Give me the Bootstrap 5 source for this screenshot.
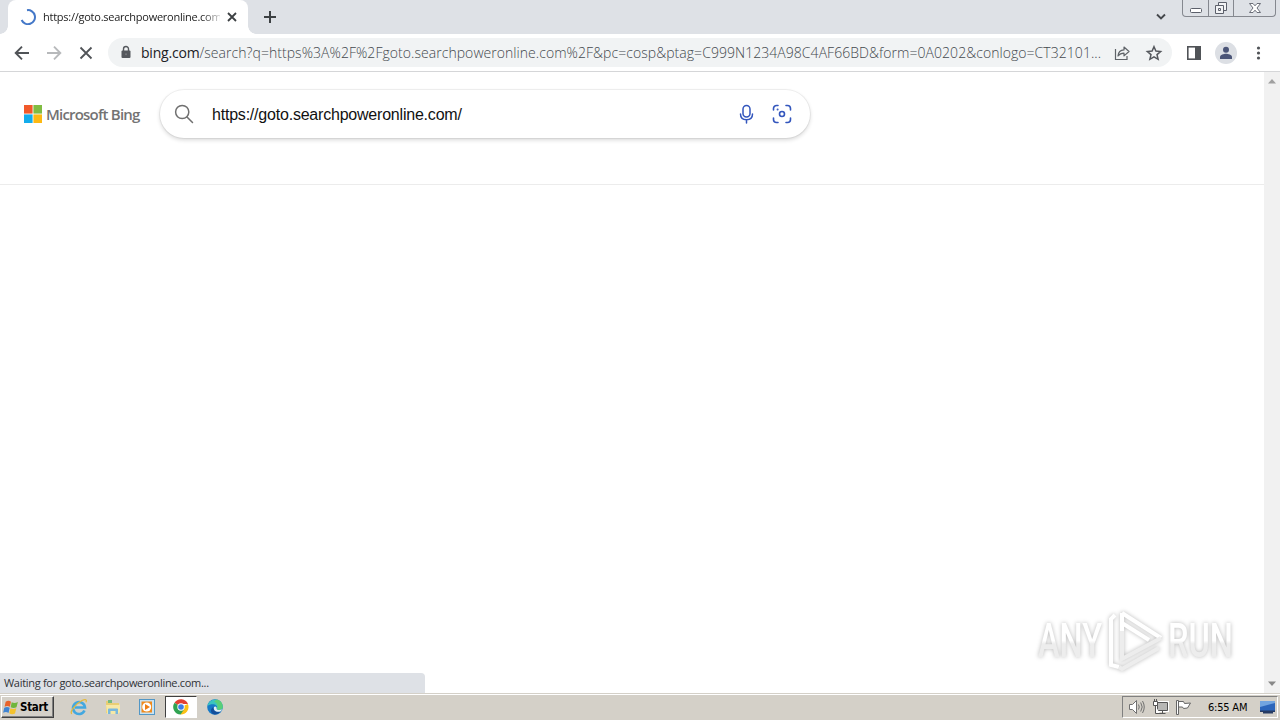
<!DOCTYPE html>
<html lang="en">

<head>
  <meta charset="UTF-8" />
  <title>https://goto.searchpoweronline.com/</title>
  <meta name="viewport" content="width=device-width, initial-scale=1" />
  <link rel="stylesheet" href="https://cdn.jsdelivr.net/npm/bootstrap@5.3.2/dist/css/bootstrap.min.css" />
  <style>
    body {
      width: 1280px;
      height: 720px;
      overflow: hidden;
      font-family: "Open Sans", "Noto Sans", sans-serif;
      background: #fff;
    }

    svg {
      display: block;
      flex-shrink: 0;
    }

    /* tab strip */
    .tab-strip {
      height: 34px;
      background: #dee1e6;
      padding-left: 8px;
    }

    .browser-tab {
      position: relative;
      width: 240px;
      height: 34px;
      padding: 0 9px 0 12px;
      background: #fff;
      border-radius: 8px 8px 0 0;
    }

    .browser-tab::before,
    .browser-tab::after {
      content: "";
      position: absolute;
      bottom: 0;
      width: 8px;
      height: 8px;
    }

    .browser-tab::before {
      left: -8px;
      background: radial-gradient(circle at 0 0, transparent 7.5px, #fff 8px);
    }

    .browser-tab::after {
      right: -8px;
      background: radial-gradient(circle at 100% 0, transparent 7.5px, #fff 8px);
    }

    .tab-title {
      width: 177px;
      margin-left: 7px;
      font-size: 11px;
      letter-spacing: -0.25px;
      color: #222;
      -webkit-mask-image: linear-gradient(90deg, #000 90%, transparent 102%);
    }

    .win-buttons {
      width: 94px;
      height: 17px;
      margin: 0 4px 0 14px;
      border: 1px solid #85888f;
      border-top: 0;
      border-radius: 0 0 4px 4px;
    }

    .win-buttons span+span {
      border-left: 1px solid #85888f;
    }

    /* toolbar */
    .toolbar {
      height: 38px;
      padding: 0 13px;
      border-bottom: 1px solid #d5d6d8;
    }

    .omnibox {
      width: 1064px;
      height: 29px;
      margin-left: 13px;
      padding: 0 9px 0 10px;
      border-radius: 15px;
      background: #f1f3f4;
    }

    .url-text {
      width: 965px;
      margin-left: 7px;
      font-size: 14px;
      font-weight: 300;
      letter-spacing: 0.05px;
      color: #44494e;
    }

    .url-text b {
      font-weight: 400;
      letter-spacing: -0.2px;
      color: #202124;
    }

    .avatar {
      width: 22px;
      height: 22px;
      background: #dcdfe4;
    }

    /* page */
    .viewport {
      height: 621px;
    }

    .bing-header {
      height: 113px;
      padding: 17px 0 0 24px;
      border-bottom: 1px solid #ececec;
    }

    .bing-name {
      width: 95px;
      margin-left: 4px;
      font-size: 15px;
      font-weight: 600;
      letter-spacing: -0.8px;
      color: #737373;
    }

    .search-box {
      width: 650px;
      height: 48px;
      margin-left: 19px;
      padding: 0 18px 0 14px;
      border-radius: 24px;
      background: #fff;
      box-shadow: 0 0 0 1px rgba(0, 0, 0, .05), 0 2px 4px rgba(0, 0, 0, .16);
    }

    .query {
      margin: 2px 0 0 18px;
      font-family: "Liberation Sans", Arial, sans-serif;
      font-size: 16px;
      letter-spacing: -0.21px;
      color: #111;
    }

    .scroll-track {
      width: 16px;
      background: #f1f1f1;
      padding: 7px 0;
    }

    .status-bubble {
      position: absolute;
      left: 0;
      bottom: 0;
      width: 425px;
      height: 20px;
      padding-left: 4px;
      border-radius: 0 4px 0 0;
      background: #dee1e6;
      font-size: 11px;
      letter-spacing: -0.3px;
      color: #303236;
    }

    .watermark {
      position: absolute;
      left: 1034px;
      bottom: 17px;
      filter: drop-shadow(0 0 2px rgba(0, 0, 0, .28));
    }

    /* taskbar */
    .taskbar {
      height: 27px;
      border-top: 1px solid #d4d0c8;
      box-shadow: inset 0 1px #fff;
      background: #d4d0c8;
      padding: 2px 2px 2px 1px;
    }

    .start-btn {
      width: 53px;
      height: 22px;
      padding-left: 1px;
      border: 1px solid;
      border-color: #fff #404040 #404040 #fff;
      box-shadow: inset -1px -1px #808080;
      font: bold 11.500px "DejaVu Sans Condensed", sans-serif;
      letter-spacing: -0.3px;
      color: #000;
    }

    .task-slot {
      width: 34px;
      height: 22px;
    }

    .task-active {
      width: 32px;
      margin: 0 1px;
      background: #fff;
      border: 1px solid;
      border-color: #404040 #fff #fff #404040;
    }

    .tray {
      width: 156px;
      height: 22px;
      padding-left: 5px;
      border: 1px solid;
      border-color: #808080 #fff #fff #808080;
    }

    .clock {
      width: 41px;
      margin-left: 16px;
      font: 11px "DejaVu Sans Condensed", sans-serif;
      letter-spacing: -0.2px;
      color: #000;
    }
  </style>
</head>

<body class="d-flex flex-column">

  <div class="tab-strip d-flex">
    <div class="browser-tab d-flex align-items-center">
      <svg width="16" height="16" viewBox="0 0 16 16" fill="none" stroke="#4478c8" stroke-width="2">
        <path d="M7 1.2A7 7 0 1 1 1.6 11" />
      </svg>
      <div class="tab-title text-nowrap overflow-hidden">https://goto.searchpoweronline.com/</div>
      <svg class="ms-auto" width="14" height="14" viewBox="0 0 14 14" stroke="#3c4043" stroke-width="1.8">
        <path d="M3 3l8 8M11 3l-8 8" />
      </svg>
    </div>
    <svg class="mt-2" style="margin-left: 13px" width="18" height="18" viewBox="0 0 18 18" stroke="#3c4043" stroke-width="2">
      <path d="M9 3v12M3 9h12" />
    </svg>
    <svg class="ms-auto mt-2" width="14" height="18" viewBox="0 0 14 18" fill="none" stroke="#45484c" stroke-width="1.9">
      <path d="M3 6.500l4 4 4-4" />
    </svg>
    <div class="win-buttons d-flex">
      <span class="d-flex justify-content-center" style="width: 25px">
        <svg width="14" height="16" viewBox="0 0 14 16" fill="#fff" stroke="#5c606b"><rect x="1.500" y="8.500" width="11" height="4" rx="1" /></svg>
      </span>
      <span class="d-flex justify-content-center" style="width: 25px">
        <svg width="14" height="16" viewBox="0 0 14 16" fill="#f2f3f5" stroke="#5c606b">
          <path d="M4.500 2.500h8v8h-8z" />
          <path d="M1.500 5.500h8v8h-8z" />
          <path d="M4.500 8.500h2v2h-2z" />
        </svg>
      </span>
      <span class="d-flex justify-content-center flex-grow-1">
        <svg width="14" height="16" viewBox="0 0 14 16" fill="#fff" stroke="#5c606b" stroke-width=".9">
          <path d="M1.500 3.500h3.500l2 2.300 2-2.300h3.500L9 8l3.500 4.500H9l-2-2.300-2 2.300H1.500L5 8z" />
        </svg>
      </span>
    </div>
  </div>

  <div class="toolbar d-flex align-items-center">
    <svg width="18" height="18" viewBox="0 0 18 18" fill="none" stroke="#505357" stroke-width="1.9"><path d="M16 9H3M9 2.700L2.700 9 9 15.300" /></svg>
    <svg style="margin-left: 14px" width="18" height="18" viewBox="0 0 18 18" fill="none" stroke="#b7b9bb" stroke-width="1.9"><path d="M2 9h13M9 2.700L15.300 9 9 15.300" /></svg>
    <svg style="margin-left: 14px" width="18" height="18" viewBox="0 0 18 18" stroke="#505357" stroke-width="1.8"><path d="M3.500 3.500l11 11M14.500 3.500l-11 11" /></svg>
    <div class="omnibox d-flex align-items-center">
      <svg width="16" height="16" viewBox="0 0 16 16">
        <rect x="3.500" y="5.500" width="9" height="7.500" rx="1" fill="#55585d" />
        <path d="M5.500 6V4a2.500 2.500 0 0 1 5 0v2" fill="none" stroke="#55585d" stroke-width="1.400" />
        <circle cx="8" cy="9.300" r="1" fill="#77797c" />
      </svg>
      <div class="url-text text-nowrap"><b>bing.com</b>/search?q=https%3A%2F%2Fgoto.searchpoweronline.com%2F&amp;pc=cosp&amp;ptag=C999N1234A98C4AF66BD&amp;form=0A0202&amp;conlogo=CT32101...</div>
      <svg class="ms-auto" width="18" height="18" viewBox="0 0 18 18" fill="none" stroke="#5f6368" stroke-width="1.200">
        <path d="M2.500 5v10.500h11.500V12" />
        <path d="M5 12c.3-3.700 2.300-6 6-6.100V3l5 4.500-5 4.400V9.200C8.500 9.200 6.500 10 5 12z" stroke-linejoin="round" />
      </svg>
      <svg style="margin-left: 14px" width="18" height="18" viewBox="0 0 18 18" fill="none" stroke="#55585d" stroke-width="1.500">
        <path d="M9 2.700l1.900 4.400 4.700.4-3.600 3.100 1.100 4.700L9 12.800l-4.100 2.500L6 10.600 2.400 7.500l4.700-.4z" />
      </svg>
    </div>
    <svg style="margin-left: 13px" width="18" height="18" viewBox="0 0 18 18">
      <rect x="2.800" y="2.800" width="12.400" height="12.400" fill="#fff" stroke="#505357" stroke-width="1.600" />
      <path d="M10 3h5v12h-5z" fill="#505357" />
    </svg>
    <div class="avatar rounded-circle d-flex justify-content-center align-items-center" style="margin-left: 12px">
      <svg width="14" height="14" viewBox="0 0 14 14" fill="#4b5577"><circle cx="7" cy="3.700" r="3" /><path d="M1 13v-2c0-2.200 4-3.200 6-3.200s6 1 6 3.200v2z" /></svg>
    </div>
    <svg style="margin-left: 12px" width="18" height="18" viewBox="0 0 18 18" fill="#505357"><circle cx="9.500" cy="4" r="1.600" /><circle cx="9.500" cy="9" r="1.600" /><circle cx="9.500" cy="14" r="1.600" /></svg>
  </div>

  <div class="viewport d-flex position-relative">
    <main class="flex-grow-1">
      <header class="bing-header d-flex align-items-start">
        <div class="d-flex align-items-center" style="height: 50px">
          <svg width="18" height="18" viewBox="0 0 18 18">
            <path d="M0 0h8.600v8.600H0z" fill="#f1592a" />
            <path d="M9.400 0H18v8.600H9.400z" fill="#80bc42" />
            <path d="M0 9.400h8.600V18H0z" fill="#13acec" />
            <path d="M9.400 9.400H18V18H9.400z" fill="#fdb913" />
          </svg>
          <div class="bing-name text-nowrap">Microsoft Bing</div>
        </div>
        <div class="search-box d-flex align-items-center" style="margin-top: 1px">
          <svg width="20" height="20" viewBox="0 0 20 20" fill="none" stroke="#707070" stroke-width="1.500" stroke-linecap="round">
            <circle cx="8.200" cy="8" r="6.600" /><path d="M13 13l5.500 5.500" />
          </svg>
          <div class="query text-nowrap">https://goto.searchpoweronline.com/</div>
          <svg class="ms-auto" width="20" height="20" viewBox="0 0 20 20" fill="none" stroke="#3356bd" stroke-width="1.500" stroke-linecap="round">
            <rect x="7" y="1.500" width="7" height="11.500" rx="3.500" /><path d="M4.500 10c0 3.700 2.500 5.700 6 5.700s6-2 6-5.700M10.500 16v3" />
          </svg>
          <svg style="margin-left: 16px" width="20" height="20" viewBox="0 0 20 20" fill="none" stroke="#3356bd" stroke-width="1.600" stroke-linecap="round">
            <path d="M1.500 6V4.500a3 3 0 0 1 3-3H6M14 1.500h1.500a3 3 0 0 1 3 3V6M18.500 14v1.500a3 3 0 0 1-3 3H14M6 18.500H4.500a3 3 0 0 1-3-3V14" />
            <circle cx="10" cy="10" r="2.500" /><circle cx="5.600" cy="5.600" r=".4" stroke-width="1.200" />
          </svg>
        </div>
      </header>
    </main>
    <div class="scroll-track d-flex flex-column justify-content-between align-items-center">
      <svg width="8" height="5" viewBox="0 0 8 5" fill="#a0a0a0"><path d="M4 0l4 4.500H0z" /></svg>
      <svg width="8" height="5" viewBox="0 0 8 5" fill="#888"><path d="M0 .5h8L4 5z" /></svg>
    </div>

    <svg class="watermark" width="208" height="72" viewBox="0 0 208 72">
      <defs>
        <linearGradient id="fade" x1="0" y1="0" x2="0" y2="1">
          <stop offset=".5" stop-color="#fff" />
          <stop offset=".56" stop-color="#ededed" />
        </linearGradient>
      </defs>
      <g fill="url(#fade)" font-family="Roboto, sans-serif" font-size="49" font-weight="500">
        <text x="4" y="53" textLength="64" lengthAdjust="spacingAndGlyphs">ANY</text>
        <text x="134" y="53" textLength="65" lengthAdjust="spacingAndGlyphs">RUN</text>
      </g>
      <g fill="none" stroke="#fff" stroke-width="4">
        <path d="M88 9l39 25M88 9v18M81 11l-4 4v46l8 2" />
        <path d="M88 27v28l39-21M85 63l3 2 37-21" stroke="#ededed" />
        <path d="M88 19l27 17" />
      </g>
    </svg>

    <div class="status-bubble d-flex align-items-center text-nowrap"><span>Waiting for goto.searchpoweronline.com...</span></div>
  </div>

  <div class="taskbar d-flex align-items-center">
    <div class="start-btn d-flex align-items-center">
      <svg width="17" height="17" viewBox="0.500 0 16 16">
        <path d="M3 2.500c2-1.200 3.500-1 5 0L7 7.300C5.200 6.200 3.700 6.300 2 7.200z" fill="#e8632b" />
        <path d="M8.700 3c1.800 1 3.500 1 5.800-.2l-1.300 5C11.300 8.700 9.500 8.700 7.700 7.700z" fill="#6fb63c" />
        <path d="M1.700 8.200c1.900-1 3.400-1 5.100.1l-1.100 4.800c-1.700-1.100-3.300-1-5.100-.1z" fill="#3f84d2" />
        <path d="M7.500 8.700c1.800 1 3.600.9 5.500.1l-1.200 4.800c-2 1-3.700.9-5.400-.1z" fill="#f3c22e" />
      </svg>
      <span>Start</span>
    </div>
    <div class="task-slot d-flex justify-content-center align-items-center" style="margin-left: 8px">
      <!-- Internet Explorer -->
      <svg width="18" height="18" viewBox="0 0 18 18" fill="none">
        <path d="M14.500 12.500a6 6 0 1 1 .5-3H5" stroke="#43a8e0" stroke-width="2.600" />
        <path d="M2 15.500C-1 15 5 6 12 2.500c4-2 5-.5 4 1.700" stroke="#e3b93d" stroke-width="1.300" />
      </svg>
    </div>
    <div class="task-slot d-flex justify-content-center align-items-center">
      <!-- Explorer folder -->
      <svg width="18" height="18" viewBox="0 0 18 18">
        <path d="M2 3h5l1 2h7v10H2z" fill="#e8ce74" />
        <path d="M4 2h4v3H4z" fill="#75ba7e" />
        <path d="M2 7h13l1-1v8l-2 2H3z" fill="#f6e8a6" />
        <path d="M4 16v-4.500q0-1 1-1h8q1 0 1 1V16h-2.500v-3h-5v3z" fill="#79b8dd" />
      </svg>
    </div>
    <div class="task-slot d-flex justify-content-center align-items-center">
      <!-- media player -->
      <svg width="18" height="18" viewBox="0 0 18 18">
        <rect x="1.500" y="1.500" width="15" height="15" fill="#c9e2f1" stroke="#5297c6" />
        <rect x="3.500" y="3.500" width="10.500" height="11" fill="#f08a1c" />
        <circle cx="8.700" cy="9" r="4.500" fill="#fff" />
        <path d="M7 6l5 3-5 3z" fill="#ee7e14" />
      </svg>
    </div>
    <div class="task-slot task-active d-flex justify-content-center align-items-center">
      <!-- Chrome -->
      <svg width="16" height="16" viewBox="0 0 16 16">
        <path d="M8 8L1.500 3.800A7.600 7.600 0 0 1 15 5H8z" fill="#e34133" />
        <path d="M8 8l6.900-3A7.600 7.600 0 0 1 7.500 15.600z" fill="#fbc116" />
        <path d="M8 8l3.300 2-3.700 5.600A7.600 7.600 0 0 1 1.500 3.800z" fill="#31a352" />
        <circle cx="8" cy="8" r="3.700" fill="#fff" />
        <circle cx="8" cy="8" r="2.800" fill="#3c7de6" />
      </svg>
    </div>
    <div class="task-slot d-flex justify-content-center align-items-center">
      <!-- Edge -->
      <svg width="18" height="18" viewBox="0 0 18 18">
        <circle cx="9" cy="9" r="7.800" fill="#1679c7" />
        <path d="M1.300 8A7.800 7.800 0 0 1 16.800 9c0 2.700-3.800 3.500-5.800 2.200 1.500-4.700-5-6.500-9.700-3.200z" fill="#3bc4c0" />
        <path d="M11 1.500A7.800 7.800 0 0 1 16.800 9c0 2.700-3.800 3.500-5.800 2.200 1-3 .8-6-3-7.700z" fill="#59cf78" />
        <path d="M7.500 9c-.3 4 3.500 5.500 7.500 4-1.500 2-4 3.800-6.500 3.600C4 15.500 4 10.500 7.500 9z" fill="#124e9b" />
        <path d="M8 9c1.500-1.500 3 0 2.600 1.500 0 1.500 3 2.200 5.700.8l-1.400 2C10.500 15 7 12.500 8 9z" fill="#e3eff3" />
      </svg>
    </div>
    <div class="tray d-flex align-items-center ms-auto">
      <!-- volume, network, action flag -->
      <svg width="18" height="16" viewBox="0 0 18 16" fill="none" stroke="#707070">
        <path d="M1.500 5.500h3l4-4v13l-4-4h-3z" fill="#fff" />
        <path d="M10.500 5.500q1.500 2.500 0 5M12.700 3.500q3 4.500 0 9M14.500 2q3.500 6 0 12" />
      </svg>
      <svg style="margin-left: 6px" width="17" height="16" viewBox="0 0 17 16" stroke="#555">
        <path d="M5.500 3.500h10v8h-10z" fill="#b7b7b5" stroke="#fff" stroke-width="3" />
        <path d="M5.500 3.500h10v8h-10zM7.500 14.500h6M10.500 12v2" fill="#b7b7b5" />
        <path d="M1.500 2.500h4v4h-4zM3.500 7v7.500H8M2.500 0v2M4.500 0v2" fill="#fff" />
      </svg>
      <svg style="margin-left: 6px" width="17" height="16" viewBox="0 0 17 16" fill="#fff" stroke="#666">
        <path d="M1.500 1.500h2v14h-2zM3.500 2.500h5l1 2 6-.5-3 5-4 .5-1-1.500h-4z" />
      </svg>
      <span class="clock text-nowrap">6:55 AM</span>
      <svg style="margin-left: 10px" width="17" height="16" viewBox="0 0 17 16">
        <path d="M1 2h15v10H1z" fill="#2c66bb" /><path d="M1 2h15v2L1 8z" fill="#72a5e0" />
        <path d="M1 11.500h15v1.500H1zM4 13h10v1.500H4z" fill="#263b63" />
      </svg>
    </div>
  </div>

  <script src="https://cdn.jsdelivr.net/npm/bootstrap@5.3.2/dist/js/bootstrap.bundle.min.js"></script>
</body>

</html>
